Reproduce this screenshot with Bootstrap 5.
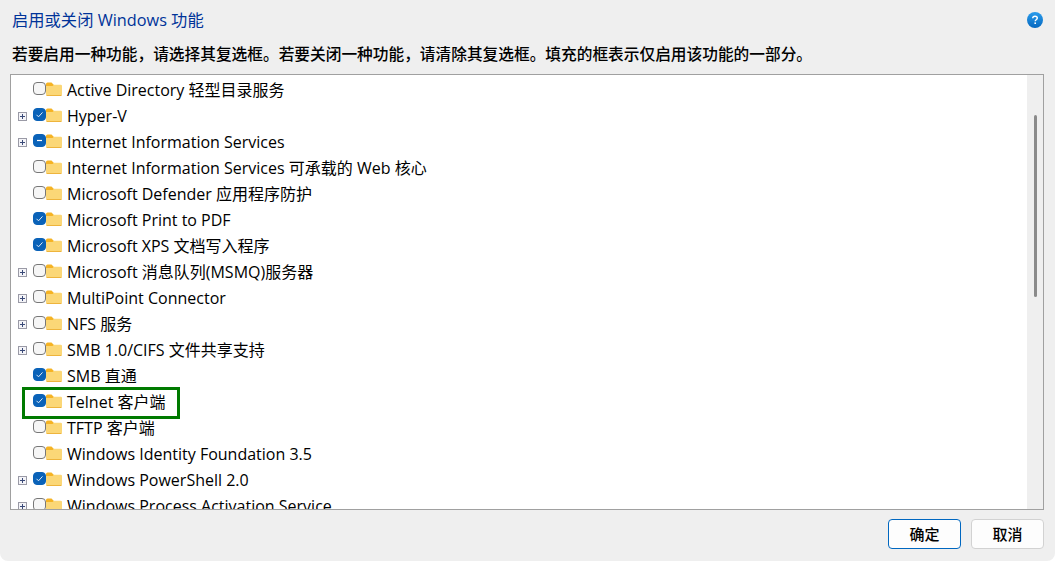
<!DOCTYPE html>
<html lang="zh-CN">
<head>
    <meta charset="UTF-8" />
    <title>启用或关闭 Windows 功能</title>
    <link href="https://cdn.jsdelivr.net/npm/bootstrap@5.3.3/dist/css/bootstrap.min.css" rel="stylesheet">
    <style>
        html, body {
            height: 100%;
            overflow: hidden;
            background-color: #fff;
        }

        body {
            font-family: "Open Sans", "Noto Sans CJK SC", sans-serif;
            color: #000;
        }

        .dlg {
            height: 561px;
            background-color: #efefef;
            border-radius: 0 0 8px 8px;
            padding: 0 11px 12px 10px;
        }

        .dlg-title {
            height: 41px;
            padding: 0 0 0 2px;
            font-size: 16.3px;
            color: #003399;
        }

        .help-icon {
            margin-right: 1px;
        }

        .dlg-hint {
            height: 34px;
            margin: 0;
            padding: 1px 0 0 2px;
            font-size: 15.7px;
            font-weight: 500;
            line-height: 26px;
            white-space: nowrap;
        }

        .feature-box {
            height: 436px;
            border: 1px solid #a0a0a0;
            background-color: #fff;
        }

        .feature-rows {
            overflow: hidden;
            padding-top: 2px;
        }

        .feature-row {
            height: 26px;
            font-size: 16px;
            white-space: nowrap;
        }

        .tree-slot {
            width: 22px;
            padding-left: 7px;
        }

        .tree-plus {
            display: block;
            width: 9px;
            height: 9px;
        }

        .tick {
            width: 13px;
            height: 13px;
            margin-top: -3px;
            border: 1px solid #777;
            border-radius: 4px;
            background-color: #f6f6f6;
        }

        .tick.on {
            border-color: #0a62b8;
            background-color: #0a62b8;
        }

        .tick svg {
            display: block;
            width: 11px;
            height: 11px;
        }

        .folder {
            width: 16px;
            height: 14px;
            margin-top: -3px;
            margin-right: 5px;
        }

        .scroll-track {
            width: 16px;
            background-color: #efefef;
            padding-top: 40px;
        }

        .scroll-thumb {
            width: 3px;
            height: 182px;
            margin: 0 auto;
            background-color: #8a8a8a;
            border-radius: 2px;
        }

        .mark-box {
            position: absolute;
            left: 11px;
            top: 312px;
            width: 158px;
            height: 32px;
            border: 3px solid #007a00;
        }

        .dlg-foot {
            gap: 10px;
            padding-top: 9px;
        }

        .dlg-btn {
            width: 73px;
            height: 30px;
            padding: 0;
            font-size: 15px;
            font-weight: 500;
            line-height: 28px;
            color: #000;
            background-color: #fdfdfd;
            border: 1px solid #d2d2d2;
            border-radius: 4px;
        }

        .dlg-btn.main {
            border-color: #0067c0;
        }
    </style>
</head>
<body>
    <div class="dlg d-flex flex-column">
        <div class="dlg-title d-flex align-items-center justify-content-between">
            <span>启用或关闭 Windows 功能</span>
            <svg width="16" height="16" viewBox="0 0 16 16" class="help-icon">
                <defs>
                    <linearGradient id="helpFill" x1="0" y1="0" x2="0" y2="1">
                        <stop offset="0" stop-color="#2a9cec" />
                        <stop offset="1" stop-color="#0668bf" />
                    </linearGradient>
                </defs>
                <circle cx="8" cy="8" r="8" fill="url(#helpFill)" />
                <path d="M5.7 6.2C5.8 4.9 6.7 4.2 8 4.2c1.4 0 2.3.8 2.3 1.9 0 1.7-2.1 1.7-2.1 3.2" fill="none" stroke="#fff" stroke-width="1.4" />
                <rect x="7.4" y="10.4" width="1.6" height="1.6" fill="#fff" />
            </svg>
        </div>
        <p class="dlg-hint">若要启用一种功能，请选择其复选框。若要关闭一种功能，请清除其复选框。填充的框表示仅启用该功能的一部分。</p>

        <div class="feature-box d-flex position-relative">
            <div id="featureRows" class="feature-rows flex-grow-1"></div>
            <div class="scroll-track flex-shrink-0">
                <div class="scroll-thumb"></div>
            </div>
            <div class="mark-box"></div>
        </div>

        <div class="dlg-foot d-flex justify-content-end">
            <button type="button" class="btn dlg-btn main">确定</button>
            <button type="button" class="btn dlg-btn">取消</button>
        </div>
    </div>

    <script>
        // [label, has expander, state: 0 off / 1 on / 2 partial]
        const features = [
            ['Active Directory 轻型目录服务', false, 0],
            ['Hyper-V', true, 1],
            ['Internet Information Services', true, 2],
            ['Internet Information Services 可承载的 Web 核心', false, 0],
            ['Microsoft Defender 应用程序防护', false, 0],
            ['Microsoft Print to PDF', false, 1],
            ['Microsoft XPS 文档写入程序', false, 1],
            ['Microsoft 消息队列(MSMQ)服务器', true, 0],
            ['MultiPoint Connector', true, 0],
            ['NFS 服务', true, 0],
            ['SMB 1.0/CIFS 文件共享支持', true, 0],
            ['SMB 直通', false, 1],
            ['Telnet 客户端', false, 1],
            ['TFTP 客户端', false, 0],
            ['Windows Identity Foundation 3.5', false, 0],
            ['Windows PowerShell 2.0', true, 1],
            ['Windows Process Activation Service', true, 0]
        ];

        const plusIcon = `<svg class="tree-plus" viewBox="0 0 9 9">
            <rect x=".5" y=".5" width="8" height="8" fill="#f4f4f8" stroke="#9a9aa6" />
            <path d="M2 4.5h5M4.5 2v5" stroke="#3a4a78" />
        </svg>`;

        const tickMarks = [
            '',
            '<svg viewBox="0 0 11 11"><path d="M2.5 5.8l2 2 4-4.4" fill="none" stroke="#dfeaf6" stroke-width="1" /></svg>',
            '<svg viewBox="0 0 11 11"><path d="M3 5.5h5" stroke="#fff" stroke-width="1.2" /></svg>'
        ];

        const folderIcon = `<svg class="folder flex-shrink-0" viewBox="0 0 16 14">
            <path d="M0 2a1.5 1.5 0 0 1 1.5-1.5h4L8 3v1H0z" fill="#f5b324" />
            <path d="M0 4h6.5L8 2.7h6.7A1.3 1.3 0 0 1 16 4v8.5a1 1 0 0 1-1 1H1a1 1 0 0 1-1-1z" fill="#fbd777" />
            <path d="M.5 13.5h15" stroke="#eeb43c" />
        </svg>`;

        document.getElementById('featureRows').innerHTML = features.map(([label, expandable, state]) => `
            <div class="feature-row d-flex align-items-center">
                <div class="tree-slot flex-shrink-0">${expandable ? plusIcon : ''}</div>
                <div class="tick flex-shrink-0 ${state ? 'on' : ''}">${tickMarks[state]}</div>
                ${folderIcon}
                <span>${label}</span>
            </div>
        `).join('');
    </script>
    <script src="https://cdn.jsdelivr.net/npm/bootstrap@5.3.3/dist/js/bootstrap.bundle.min.js"></script>
</body>
</html>
